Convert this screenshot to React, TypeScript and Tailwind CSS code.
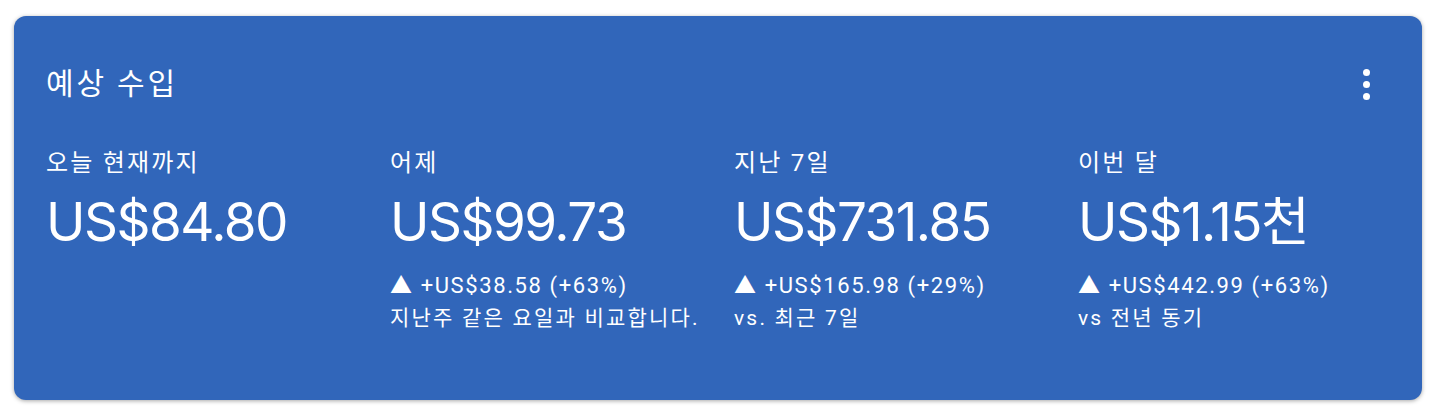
import React from "react";

const base = { fontFamily: 'Roboto, "Noto Sans CJK KR", sans-serif' };
const big = { fontFamily: 'Inter, "Noto Sans CJK KR", sans-serif' };

const cols = [
  { label: "오늘 현재까지", value: "US$84.80", delta: null as string | null, note: null as string | null },
  { label: "어제", value: "US$99.73", delta: "+US$38.58 (+63%)", note: "지난주 같은 요일과 비교합니다." },
  { label: "지난 7일", value: "US$731.85", delta: "+US$165.98 (+29%)", note: "vs. 최근 7일" },
  { label: "이번 달", value: "US$1.15천", delta: "+US$442.99 (+63%)", note: "vs 전년 동기" },
];

export default function App() {
  return (
    <div className="bg-white w-[1440px] h-[414px] pt-4 pl-[14px]" style={base}>
      <div className="w-[1408px] h-[384px] rounded-[12px] bg-[#3166BA] text-white shadow-[0_1px_4px_rgba(0,0,0,0.35)] flex flex-col">
        <div className="flex items-center justify-between pl-8 pr-[52px] pt-[50px]">
          <div className="text-[30px] leading-[36px] tracking-[2.8px]">예상 수입</div>
          <div className="flex flex-col gap-[5px] items-center">
            <span className="w-[7px] h-[7px] rounded-full bg-white" />
            <span className="w-[7px] h-[7px] rounded-full bg-white" />
            <span className="w-[7px] h-[7px] rounded-full bg-white" />
          </div>
        </div>
        <div className="grid grid-cols-4 pl-8 mt-[45px]">
          {cols.map((c) => (
            <div key={c.label} className="flex flex-col">
              <div className="text-[24px] leading-[32px] tracking-[2.2px]">{c.label}</div>
              <div className="text-[53px] leading-[64px] mt-[11px] tracking-[-1.5px]" style={big}>
                {c.value}
              </div>
              {c.delta && (
                <div className="mt-[16px]">
                  <div className="text-[22px] leading-[32px] tracking-[1.6px]">▲ {c.delta}</div>
                  <div className="text-[21px] leading-[32px] tracking-[2.2px]">{c.note}</div>
                </div>
              )}
            </div>
          ))}
        </div>
      </div>
    </div>
  );
}
